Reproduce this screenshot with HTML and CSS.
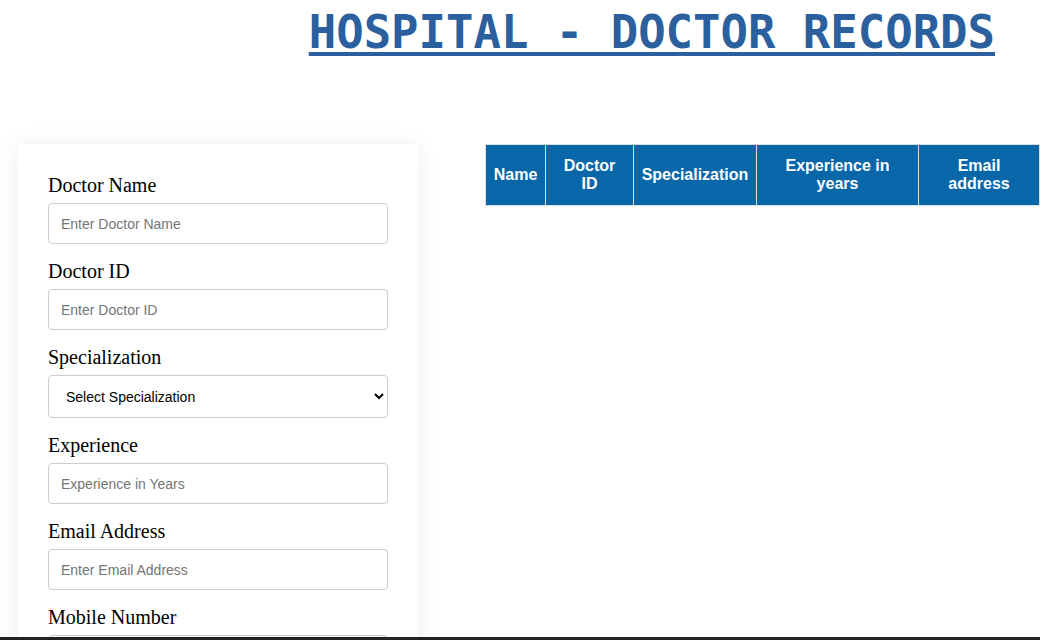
FILE: index.html
```html
<!DOCTYPE html>
<html>
<head>
<meta charset="utf-8">
<title>Hospital - Doctor Records</title>
<link rel="stylesheet" href="styles.css">
</head>
<body>
<h1 class="title">HOSPITAL - DOCTOR RECORDS</h1>
<div class="main">
  <form class="card">
    <div class="field">
      <label class="label">Doctor Name</label>
      <input class="input" type="text" placeholder="Enter Doctor Name">
    </div>
    <div class="field">
      <label class="label">Doctor ID</label>
      <input class="input" type="text" placeholder="Enter Doctor ID">
    </div>
    <div class="field">
      <label class="label">Specialization</label>
      <select class="input select">
        <option>Select Specialization</option>
        <option>Cardiology</option>
        <option>Neurology</option>
        <option>Orthopedics</option>
      </select>
    </div>
    <div class="field">
      <label class="label">Experience</label>
      <input class="input" type="text" placeholder="Experience in Years">
    </div>
    <div class="field">
      <label class="label">Email Address</label>
      <input class="input" type="text" placeholder="Enter Email Address">
    </div>
    <div class="field">
      <label class="label">Mobile Number</label>
      <input class="input" type="text" placeholder="Enter Mobile Number">
    </div>
  </form>
  <div class="table-wrap">
    <table class="records">
      <colgroup>
        <col class="c1"><col class="c2"><col class="c3"><col class="c4"><col class="c5">
      </colgroup>
      <thead>
        <tr>
          <th>Name</th>
          <th>Doctor<br>ID</th>
          <th>Specialization</th>
          <th>Experience in<br>years</th>
          <th>Email<br>address</th>
        </tr>
      </thead>
      <tbody></tbody>
    </table>
  </div>
</div>
<div class="edge"></div>
</body>
</html>
```

FILE: styles.css
```css
html, body {
  margin: 0;
  padding: 0;
  background: #ffffff;
}

body {
  font-family: "Liberation Serif", "Times New Roman", serif;
}

.title {
  margin: 6px 0 0 0;
  padding-right: 45px;
  text-align: right;
  font-family: "DejaVu Sans Mono", monospace;
  font-size: 45.6px;
  font-weight: bold;
  color: #2b5f9e;
  text-decoration: underline;
  text-decoration-thickness: 4px;
  text-underline-offset: 4px;
  line-height: 54px;
}

.main {
  display: flex;
  align-items: flex-start;
  gap: 67px;
  padding-left: 18px;
  margin-top: 84px;
}

.card {
  width: 400px;
  box-sizing: border-box;
  padding: 14px 30px 30px 30px;
  background: #ffffff;
  box-shadow: 0 0 22px rgba(0, 0, 0, 0.07);
  flex: none;
}

.field {
  display: flex;
  flex-direction: column;
  padding-top: 16px;
}

.label {
  font-size: 20px;
  line-height: 23px;
  color: #000000;
  margin-bottom: 6px;
}

.input {
  box-sizing: border-box;
  width: 340px;
  height: 41px;
  padding: 0 12px;
  border: 1px solid #cccccc;
  border-radius: 4px;
  font-family: "Liberation Sans", Arial, sans-serif;
  font-size: 14px;
  color: #000000;
  background: #ffffff;
  outline: none;
}

.input::placeholder {
  color: #757575;
}

.select {
  height: 43px;
  padding: 0 8px 0 13px;
}

.table-wrap {
  flex: 1;
}

.records {
  width: 100%;
  border-collapse: collapse;
  table-layout: fixed;
  font-family: "Liberation Sans", Arial, sans-serif;
}

.c1 { width: 60px; }
.c2 { width: 88px; }
.c3 { width: 123px; }
.c4 { width: 162px; }
.c5 { width: 121px; }

.records th {
  background: #0767a9;
  color: #ffffff;
  font-size: 16px;
  font-weight: bold;
  line-height: 18px;
  height: 61px;
  box-sizing: border-box;
  padding: 6px 7px;
  border: 1px solid #dddddd;
  text-align: center;
  vertical-align: middle;
}

.edge {
  position: fixed;
  left: 0;
  right: 0;
  bottom: 0;
  height: 3px;
  background: #222222;
}
```
